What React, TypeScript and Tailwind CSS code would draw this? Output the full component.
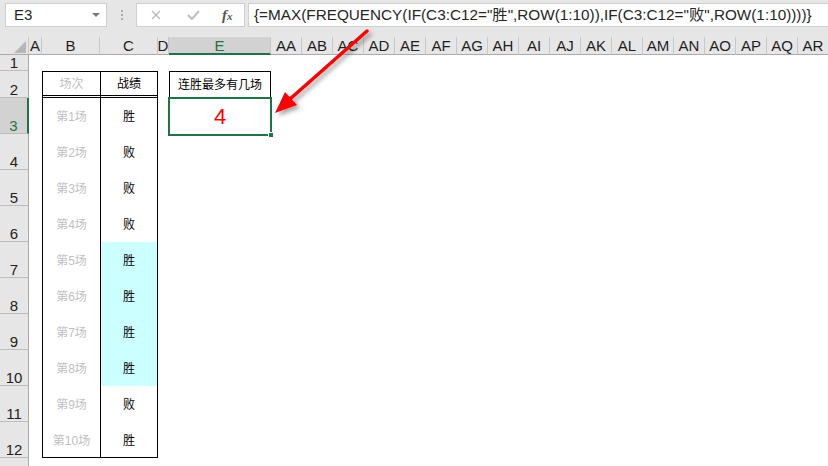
import React from 'react';

// column header definitions (widths match the sheet)
const extraCols = ['AA', 'AB', 'AC', 'AD', 'AE', 'AF', 'AG', 'AH', 'AI', 'AJ', 'AK', 'AL', 'AM', 'AN', 'AO', 'AP', 'AQ', 'AR'];

const cols = [
  { name: 'A', w: 'w-[13px]' },
  { name: 'B', w: 'w-[58px]' },
  { name: 'C', w: 'w-[58px]' },
  { name: 'D', w: 'w-[11px]' },
  { name: 'E', w: 'w-[102px]' },
  ...extraCols.map(n => ({ name: n, w: 'w-[31px]' })),
];

const games = ['胜', '败', '败', '败', '胜', '胜', '胜', '胜', '败', '胜'];

const rows = [
  { n: 1, h: 'h-[16px]' },
  { n: 2, h: 'h-[27px]' },
  ...games.map((_, i) => ({ n: i + 3, h: 'h-[36px]' })),
  { n: 13, h: 'h-[20px]' },
];

const RowHeader: React.FC<{ n: number; selected?: boolean }> = ({ n, selected }) => (
  <div
    className={
      selected
        ? 'w-[29px] shrink-0 h-full flex items-end justify-center bg-[#d2d2d2] text-[#217346] border-r-2 border-r-[#217346] border-b border-b-[#bdbdbd] text-[15px] leading-[13px] pb-[1px]'
        : 'w-[29px] shrink-0 h-full flex items-end justify-center bg-[#e6e6e6] text-[#1e1e1e] border-r border-r-[#a8a8a8] border-b border-b-[#bdbdbd] text-[15px] leading-[13px] pb-[1px]'
    }
  >
    {n < 13 ? n : ''}
  </div>
);

const TableB: React.FC<{ n: number }> = ({ n }) => {
  if (n === 2)
    return (
      <div className="w-[58px] shrink-0 h-full flex items-center justify-center border-l border-t border-b-[3px] border-double border-black text-[12px] text-[#bfbfbf]">
        场次
      </div>
    );
  if (n >= 3 && n <= 12)
    return (
      <div
        className={
          n === 12
            ? 'w-[58px] shrink-0 h-full flex items-center justify-center pt-[2px] border-l border-b border-black text-[12px] text-[#bfbfbf]'
            : 'w-[58px] shrink-0 h-full flex items-center justify-center pt-[2px] border-l border-black text-[12px] text-[#bfbfbf]'
        }
      >
        第{n - 2}场
      </div>
    );
  return <div className="w-[58px] shrink-0 h-full" />;
};

const TableC: React.FC<{ n: number }> = ({ n }) => {
  if (n === 2)
    return (
      <div className="w-[58px] shrink-0 h-full flex items-center justify-center border-l border-r border-t border-b-[3px] border-double border-black text-[12px] text-black">
        战绩
      </div>
    );
  if (n >= 3 && n <= 12) {
    const streak = n >= 7 && n <= 10;
    let cls = 'w-[58px] shrink-0 h-full flex items-center justify-center pt-[2px] border-l border-r border-black text-[12px] text-black';
    if (streak) cls += ' bg-[#ccffff]';
    if (n === 12) cls += ' border-b';
    return <div className={cls}>{games[n - 3]}</div>;
  }
  return <div className="w-[58px] shrink-0 h-full" />;
};

const CellE: React.FC<{ n: number }> = ({ n }) => {
  if (n === 2)
    return (
      <div className="w-[102px] shrink-0 h-full flex items-center justify-center border border-black text-[12px] text-black">
        连胜最多有几场
      </div>
    );
  if (n === 3)
    return (
      <div className="w-[102px] shrink-0 h-full relative flex items-center justify-center text-[22px] text-[#ff0000]">
        4
        <div className="absolute -top-[1px] -left-[1px] -right-[1px] -bottom-[2px] border-2 border-[#217346] z-10">
          <div className="absolute -right-[4px] -bottom-[4px] w-[6px] h-[6px] bg-[#217346] border border-white" />
        </div>
      </div>
    );
  return <div className="w-[102px] shrink-0 h-full" />;
};

export default function App() {
  return (
    <div className="w-[828px] h-[466px] overflow-hidden bg-white relative font-['Liberation_Sans','Noto_Sans_CJK_SC',sans-serif]">
      {/* formula bar */}
      <div className="h-[37px] bg-[#e6e6e6] flex items-start pt-[3px]">
        <div className="ml-[5px] w-[102px] h-[24px] bg-white border border-[#cfcfcf] flex items-center pl-[8px] text-[15px] text-[#262626]">
          E3
          <svg className="ml-auto mr-[6px]" width="8" height="4" viewBox="0 0 8 4">
            <polygon points="0,0 8,0 4,4" fill="#7a7a7a" />
          </svg>
        </div>
        <div className="ml-[14px] h-[24px] flex flex-col justify-center gap-[2px]">
          <div className="w-[2px] h-[2px] bg-[#adadad]" />
          <div className="w-[2px] h-[2px] bg-[#adadad]" />
          <div className="w-[2px] h-[2px] bg-[#adadad]" />
        </div>
        <div className="ml-[13px] w-[109px] h-[24px] bg-white border border-[#cfcfcf] flex items-center">
          <svg className="ml-[14px]" width="10" height="10" viewBox="0 0 10 10">
            <path d="M1 1 L9 9 M9 1 L1 9" stroke="#b8b8b8" strokeWidth="1.2" />
          </svg>
          <svg className="ml-[26px]" width="13" height="10" viewBox="0 0 13 10">
            <path d="M1 5 L5 9 L12 1" stroke="#bdbdbd" strokeWidth="2" fill="none" />
          </svg>
          <span className="ml-[22px] font-['Liberation_Serif',serif] italic font-bold text-[15px] text-[#555555] leading-none">
            f<span className="text-[11px]">x</span>
          </span>
        </div>
        <div className="ml-[3px] flex-1 h-[24px] bg-white border border-[#cfcfcf] border-r-0 flex items-center pl-[5px] text-[15.3px] text-[#262626] whitespace-nowrap overflow-hidden">
          {'{=MAX(FREQUENCY(IF(C3:C12="胜",ROW(1:10)),IF(C3:C12="败",ROW(1:10))))}'}
        </div>
      </div>

      {/* column headers */}
      <div className="flex h-[18px]">
        <div className="w-[29px] shrink-0 h-full bg-[#e6e6e6] border-r border-r-[#c8c8c8] border-b border-b-[#ababab] flex items-end justify-end pr-[2px] pb-[1px]">
          <svg width="12" height="12" viewBox="0 0 12 12">
            <polygon points="0,12 12,12 12,0" fill="#b6b6b6" />
          </svg>
        </div>
        {cols.map(c => (
          <div
            key={c.name}
            className={
              c.name === 'E'
                ? `${c.w} shrink-0 h-full flex items-center justify-center bg-[#d2d2d2] text-[#217346] border-r border-r-[#c8c8c8] border-b-2 border-b-[#217346] text-[15px] leading-none`
                : `${c.w} shrink-0 h-full flex items-center justify-center bg-[#e6e6e6] text-[#1e1e1e] border-r border-r-[#c8c8c8] border-b border-b-[#ababab] text-[15px] leading-none`
            }
          >
            {c.name}
          </div>
        ))}
      </div>

      {/* sheet rows */}
      {rows.map(r => (
        <div key={r.n} className={`flex ${r.h}`}>
          <RowHeader n={r.n} selected={r.n === 3} />
          <div className="w-[13px] shrink-0 h-full" />
          <TableB n={r.n} />
          <TableC n={r.n} />
          <div className="w-[11px] shrink-0 h-full" />
          <CellE n={r.n} />
          <div className="flex-1 h-full" />
        </div>
      ))}

      {/* annotation arrow */}
      <svg className="absolute inset-0 pointer-events-none z-20" width="828" height="466" viewBox="0 0 828 466">
        <defs>
          <filter id="sh" x="-20%" y="-20%" width="140%" height="140%">
            <feDropShadow dx="3" dy="3" stdDeviation="2" floodColor="#000000" floodOpacity="0.35" />
          </filter>
        </defs>
        <g filter="url(#sh)">
          <line x1="367" y1="31" x2="290" y2="99" stroke="#ff0000" strokeWidth="3.5" strokeLinecap="round" />
          <polygon points="275,113 285,92 297,105" fill="#ff0000" />
        </g>
      </svg>
    </div>
  );
}
